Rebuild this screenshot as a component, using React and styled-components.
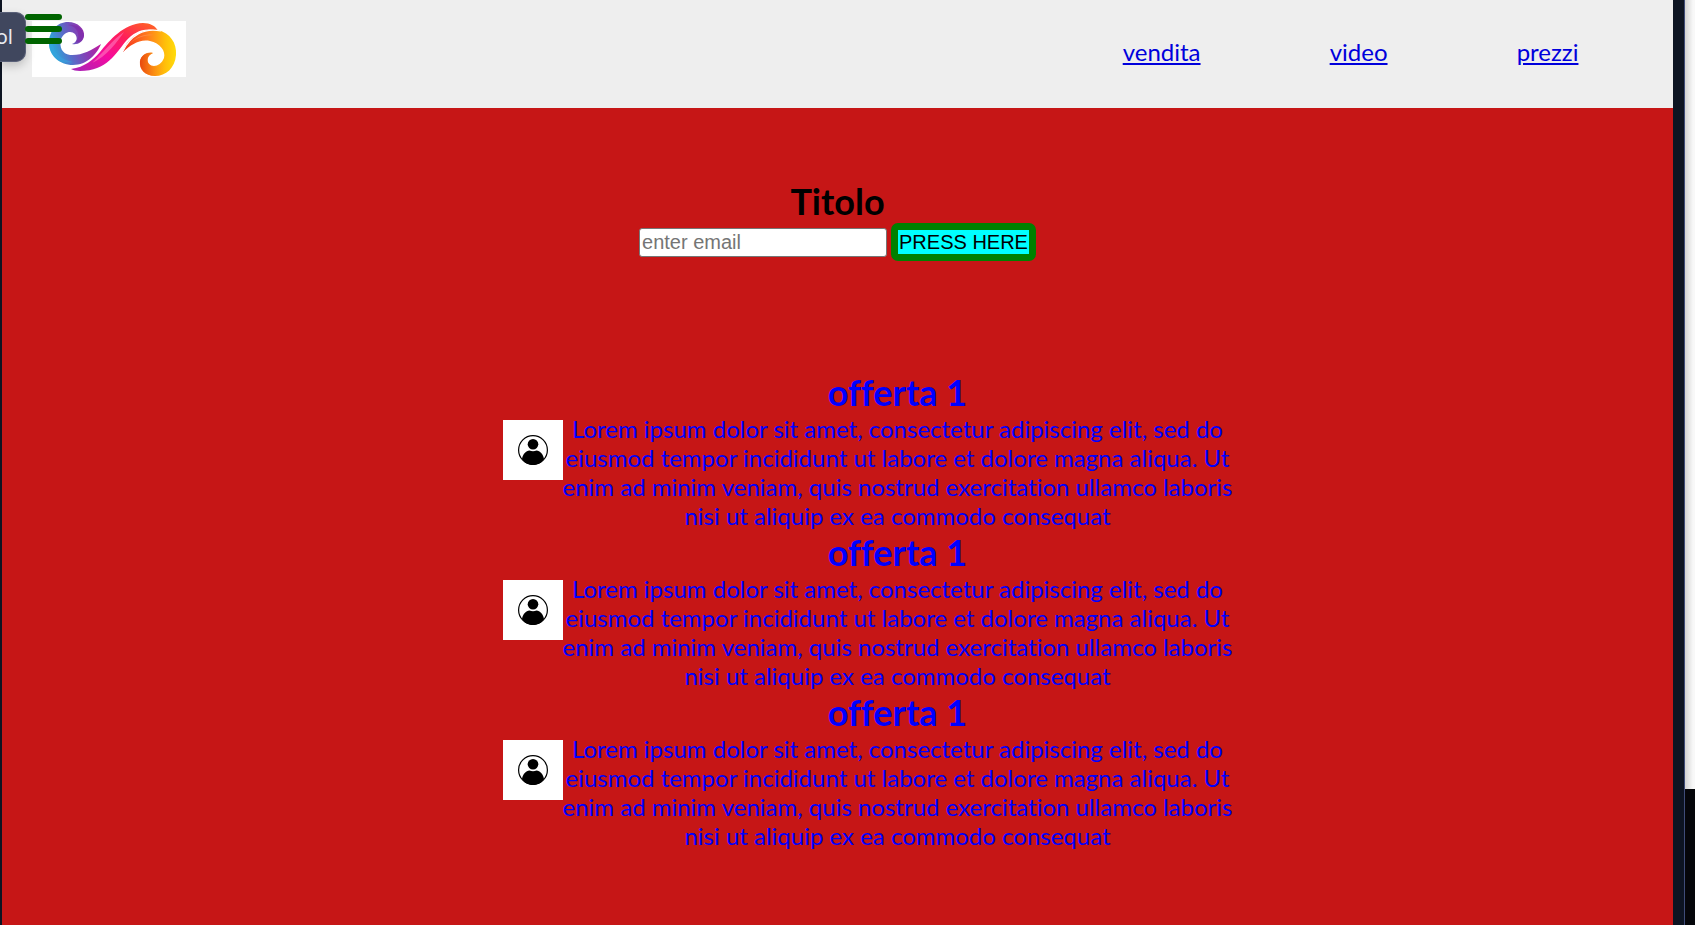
import React from "react";
import styled, { createGlobalStyle } from "styled-components";

const GlobalStyle = createGlobalStyle`
  * { box-sizing: border-box; margin: 0; padding: 0; }
  body {
    background: #0d1422;
    font-family: Lato, sans-serif;
    font-size: 24px;
    font-variant-ligatures: none;
    line-height: 29px;
  }
`;

const Frame = styled.div`
  display: flex;
  min-height: 100vh;
  padding-left: 2px;
  overflow: hidden;
`;

const Page = styled.div`
  flex: 1;
  min-width: 0;
  background: #c61616;
`;

const Edge = styled.div`
  width: 12px;
  border-right: 1px solid #3f4c78;
`;

const Backdrop = styled.div`
  display: flex;
  flex-direction: column;
  width: 10px;
  background: #05060a;

  &::before {
    content: "";
    height: 789px;
    background: linear-gradient(90deg, #d2d2d2, #f8f8f8 80%);
  }
`;

const Header = styled.header`
  display: flex;
  justify-content: space-between;
  align-items: flex-start;
  height: 108px;
  padding: 21px 30px 0;
  background: #eee;
`;

const LogoImage = styled.svg`
  display: block;
  width: 154px;
  height: 56px;
  background: #fff;
`;

const Nav = styled.nav`
  width: calc(35% + 21px);
  margin-top: 16px;
`;

const NavList = styled.ul`
  display: flex;
  justify-content: space-around;
  list-style: none;
`;

const NavLink = styled.a`
  color: #0000dc;
`;

const MenuButton = styled.button`
  position: absolute;
  top: 14px;
  left: 25px;
  display: flex;
  flex-direction: column;
  gap: 6px;
  width: 37px;
  border: 0;
  background: none;
`;

const MenuBar = styled.span`
  height: 6px;
  border-radius: 3px;
  background: #006400;
`;

const Tooltip = styled.div`
  position: absolute;
  top: 12px;
  left: 0;
  display: flex;
  justify-content: flex-end;
  align-items: center;
  width: 26px;
  height: 50px;
  padding-right: 12px;
  border: 1px solid #596078;
  border-left: 0;
  border-radius: 0 10px 10px 0;
  background: #40475e;
  box-shadow: 0 4px 10px rgba(0, 0, 0, 0.2);
  color: #e8eaf0;
  font: 20px/28px "Noto Sans", sans-serif;
`;

const Hero = styled.section`
  padding: 71px 0 109px;
  text-align: center;
`;

const Title = styled.h1`
  font-size: 36px;
  line-height: 44px;
`;

const SignupForm = styled.form`
  display: flex;
  justify-content: center;
  align-items: center;
  gap: 4px;
`;

const EmailInput = styled.input`
  width: 248px;
  height: 29px;
  padding: 1px 2px;
  border: 1px solid #767676;
  border-radius: 3px;
  background: #fff;
  font: 20px "Liberation Sans", sans-serif;

  &::placeholder { color: #757575; }
`;

const SubmitButton = styled.button`
  height: 38px;
  padding: 0 1px;
  border: 7px solid #008000;
  border-radius: 7px;
  background: #0ff;
  color: #000;
  font: 20px "Liberation Sans", sans-serif;
`;

const Offer = styled.article`
  display: flex;
  align-items: flex-start;
  padding-left: 30%;
  color: #00f;
`;

const Avatar = styled.svg`
  flex: none;
  width: 60px;
  height: 60px;
  margin-top: 50px;
  background: #fff;
`;

const OfferBody = styled.div`
  flex: none;
  width: calc(100% * 4 / 7);
  text-align: center;
`;

const OfferTitle = styled.h2`
  font-size: 36px;
  line-height: 44px;
`;

const OfferText = styled.p`
  margin: 0 -6px;
`;

function Logo() {
  return (
    <LogoImage viewBox="0 0 154 56" role="img" aria-label="Logo">
      <defs>
        <linearGradient id="cool" x1="0" y1="0.6" x2="1" y2="0.3">
          <stop offset="0" stopColor="#22b4dc" />
          <stop offset="0.35" stopColor="#5a6ac8" />
          <stop offset="0.65" stopColor="#8a3ab4" />
          <stop offset="1" stopColor="#d0149a" />
        </linearGradient>
        <linearGradient id="ribbon" x1="0" y1="1" x2="1" y2="0">
          <stop offset="0" stopColor="#a426b8" />
          <stop offset="0.35" stopColor="#f50aa0" />
          <stop offset="0.65" stopColor="#ff1e5a" />
          <stop offset="1" stopColor="#ff6a1e" />
        </linearGradient>
        <linearGradient id="warm" x1="0" y1="0" x2="1" y2="0">
          <stop offset="0" stopColor="#f5301e" />
          <stop offset="0.45" stopColor="#ff7a1e" />
          <stop offset="0.8" stopColor="#ffc00a" />
          <stop offset="1" stopColor="#ffdc0a" />
        </linearGradient>
        <linearGradient id="curl" x1="0" y1="0" x2="1" y2="0">
          <stop offset="0" stopColor="#e8480e" />
          <stop offset="1" stopColor="#ffb40a" stopOpacity="0" />
        </linearGradient>
      </defs>
      <path fill="url(#cool)" d="M40 23C45 21 46 17 43 13C39 9 32 11 29 18C27 26 30 33 38 34C49 35 60 29 69 23C65 33 55 44 41 44C27 44 17 34 17 22C17 10 25 1 36 1C46 1 53 8 52 15C51 21 46 24 40 23Z" />
      <path fill="#3aa0e0" opacity="0.6" d="M21 14C18 26 25 38 41 41C27 44 17 34 17 22C17 19 18 16 21 14Z" />
      <path fill="#7a2aa8" opacity="0.6" d="M36 4C46 5 49 15 44 21C47 23 52 19 52 14C51 7 44 3 36 4Z" />
      <path fill="url(#ribbon)" d="M39 48C53 46 61 39 68 31C78 19 91 3 111 2C118 2 124 5 126 10C112 6 102 11 94 20C84 32 75 50 48 50C44 50 41 49 39 48Z" />
      <path fill="#ff78c0" opacity="0.6" d="M60 42C71 32 80 19 92 11C86 20 74 36 60 42Z" />
      <path fill="url(#warm)" d="M91 31C95 16 111 7 126 9C138 12 145 22 144 34C143 47 134 55 123 55C113 55 107 48 108 41C109 34 115 31 121 32C116 34 114 39 117 43C121 47 129 45 132 37C134 30 128 22 118 20C107 18 99 24 91 31Z" />
      <path fill="url(#curl)" d="M121 32C114 30 107 36 108 43C109 51 116 55 124 55C132 52 134 46 133 40C130 46 121 48 117 43C114 39 116 34 121 32Z" />
      <path fill="#ffb080" opacity="0.4" d="M97 23C104 16 113 12 122 14C112 14 104 17 97 23Z" />
      <path fill="none" stroke="#fff" strokeWidth="1.2" d="M91 30C98 15 112 6 129 10" />
    </LogoImage>
  );
}

function UserPicture() {
  return (
    <Avatar viewBox="0 0 60 60" role="img" aria-label="User">
      <circle cx="30" cy="30" r="14.4" fill="#fff" stroke="#000" strokeWidth="1.2" />
      <circle cx="30" cy="24.3" r="5.3" />
      <path d="M19 39C20 34 23 30.800 26.500 30.600C28.500 31.300 31.500 31.300 33.500 30.600C37 30.800 40 34 41 39C38 43.500 34 45 30 45C26 45 22 43.500 19 39Z" />
    </Avatar>
  );
}

const links = ["vendita", "video", "prezzi"];
const offers = [1, 2, 3];

export default function App() {
  return (
    <>
      <GlobalStyle />
      <Frame>
        <Page>
          <Header>
            <Logo />
            <Nav>
              <NavList>
                {links.map((name) => (
                  <li key={name}>
                    <NavLink href={`#${name}`}>{name}</NavLink>
                  </li>
                ))}
              </NavList>
            </Nav>
          </Header>
          <main>
            <Hero>
              <Title>Titolo</Title>
              <SignupForm onSubmit={(event) => event.preventDefault()}>
                <EmailInput type="email" aria-label="Email" placeholder="enter email" />
                <SubmitButton type="submit">PRESS HERE</SubmitButton>
              </SignupForm>
            </Hero>
            {offers.map((id) => (
              <Offer key={id}>
                <UserPicture />
                <OfferBody>
                  <OfferTitle>offerta 1</OfferTitle>
                  <OfferText>
                    Lorem ipsum dolor sit amet, consectetur adipiscing elit, sed do eiusmod tempor
                    incididunt ut labore et dolore magna aliqua. Ut enim ad minim veniam, quis
                    nostrud exercitation ullamco laboris nisi ut aliquip ex ea commodo consequat
                  </OfferText>
                </OfferBody>
              </Offer>
            ))}
          </main>
        </Page>
        <Edge />
        <Backdrop />
      </Frame>
      <Tooltip>ol</Tooltip>
      <MenuButton type="button" aria-label="Menu">
        <MenuBar />
        <MenuBar />
        <MenuBar />
      </MenuButton>
    </>
  );
}
